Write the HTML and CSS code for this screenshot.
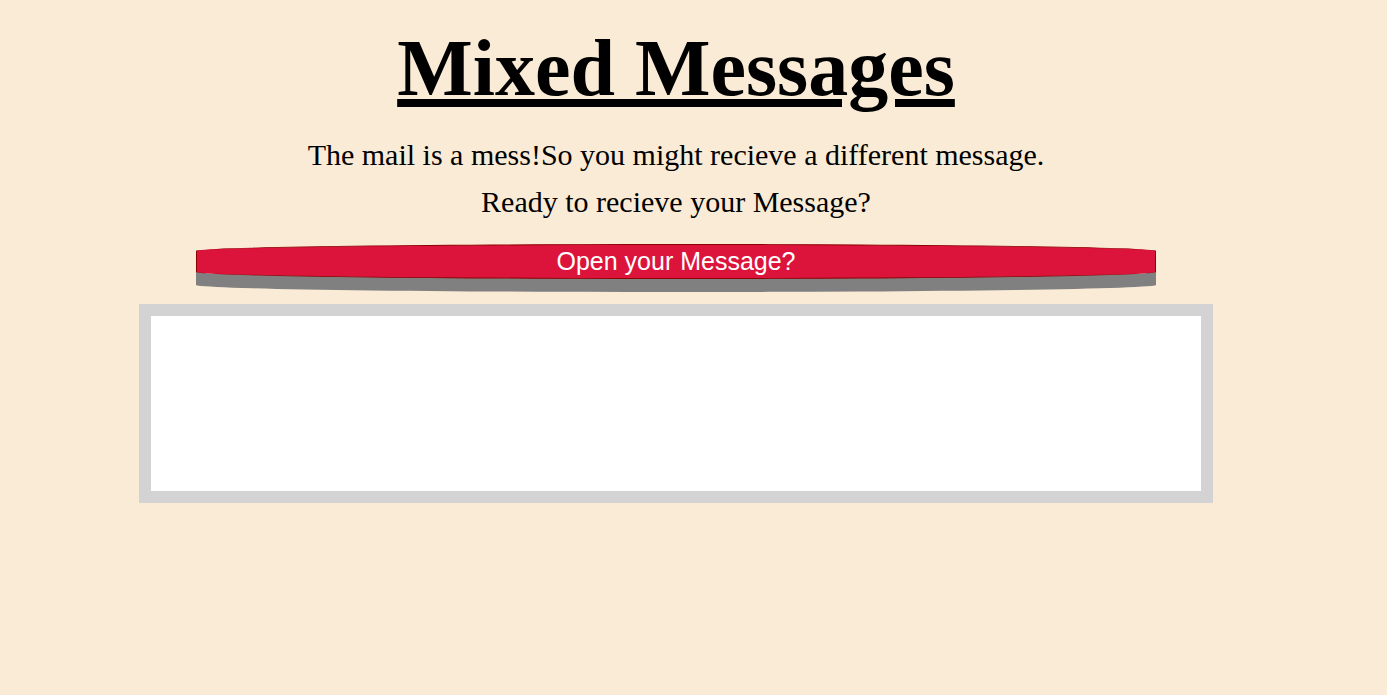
FILE: index.html
```html
<!DOCTYPE html>
<html>
<head>
<meta charset="utf-8">
<title>Mixed Messages</title>
<link rel="stylesheet" href="styles.css">
</head>
<body>
<main class="page">
  <h1 class="title">Mixed Messages</h1>
  <p class="intro intro-first">The mail is a mess!So you might recieve a different message.</p>
  <p class="intro">Ready to recieve your Message?</p>
  <button class="open-btn" type="button">Open your Message?</button>
  <div class="message-box"></div>
</main>
</body>
</html>
```

FILE: styles.css
```css
html, body {
  margin: 0;
  padding: 0;
  background: #FAEBD7;
}
.page {
  width: 1352px;
  display: flex;
  flex-direction: column;
  align-items: center;
  font-family: "Liberation Serif", "Times New Roman", serif;
  color: #000;
}
.title {
  margin: 22px 0 0;
  font-size: 80px;
  line-height: 92px;
  font-weight: bold;
  text-decoration: underline;
}
.intro {
  margin: 0;
  font-size: 30px;
  line-height: 47px;
}
.intro-first {
  margin-top: 17px;
}
.open-btn {
  margin-top: 19px;
  width: 960px;
  height: 35px;
  background: #DC143C;
  border: 1px solid #8B0000;
  border-radius: 50% / 20%;
  box-shadow: 0 13px 0 #808080;
  color: #fff;
  font-family: "Liberation Sans", Arial, sans-serif;
  font-size: 25px;
  line-height: 33px;
  padding: 0;
}
.message-box {
  box-sizing: border-box;
  margin-top: 25px;
  width: 1074px;
  height: 199px;
  background: #fff;
  border: 12px solid #D3D3D3;
}
```
